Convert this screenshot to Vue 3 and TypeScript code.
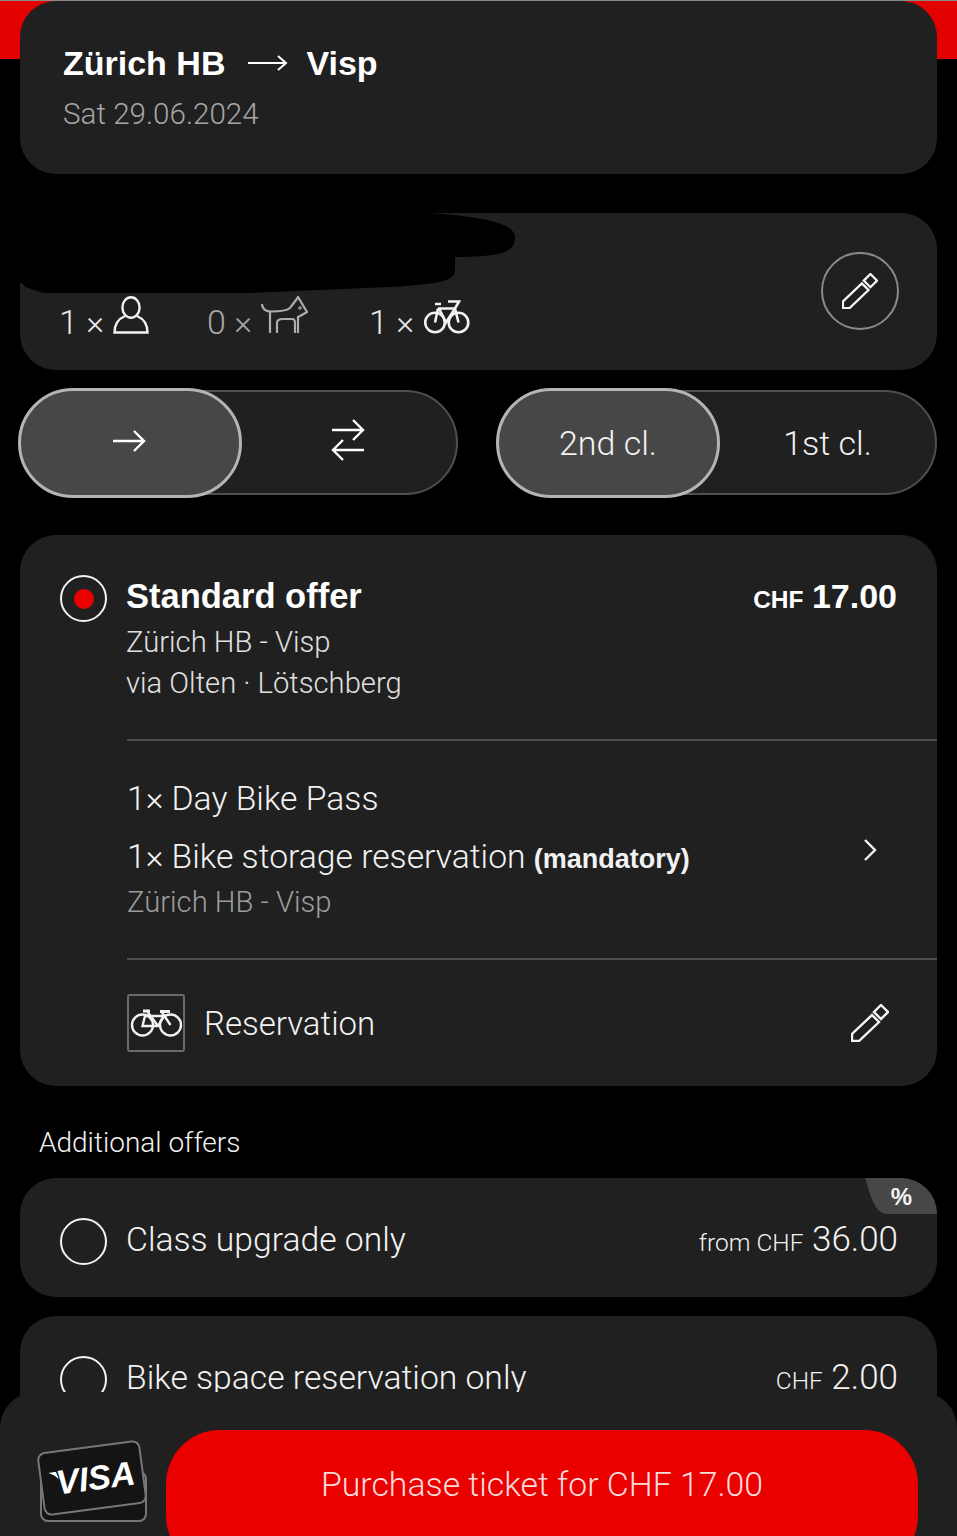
<script setup lang="ts">
import { ref } from "vue";

const trip = ref({ from: "Zürich HB", to: "Visp", date: "Sat 29.06.2024" });
const lines = ["1× Day Bike Pass"];
</script>

<template>
	<div class="page">
		<header class="card head">
			<div class="route">
				<span>{{ trip.from }}</span>
				<svg class="route-arrow" width="40" height="18" viewBox="0 0 40 18" fill="none" stroke="#fff" stroke-width="2">
					<path d="M0 9H38M30 2L38 9L30 16" />
				</svg>
				<span>{{ trip.to }}</span>
			</div>
			<div class="date">{{ trip.date }}</div>
		</header>

		<section class="card travellers">
			<div class="count-row">
				<div class="count">
					<span>1 ×</span>
					<svg width="36" height="38" viewBox="0 0 36 38" fill="none" stroke="#f2f2f2" stroke-width="2.4">
						<ellipse cx="18" cy="11.5" rx="8.6" ry="10.2" />
						<path d="M12 20C5 23 1.5 29 1.5 36.5H34.5C34.5 29 31 23 24 20" />
					</svg>
				</div>
				<div class="count dim">
					<span>0 ×</span>
					<svg width="47" height="38" viewBox="0 0 47 38" fill="none" stroke="#adadad" stroke-width="2.2">
						<path d="M0.8 8C2 14 5 15.5 10 15.5C18 15.5 26 14.5 29 12L35 4L37 1L46 16L39 20L37 21V37" />
						<path d="M9 15.5V37M16 37V27C16 24 19 23 22 23H31C33 23 34 24 34 27V37" />
						<circle cx="39" cy="12" r="0.6" />
					</svg>
				</div>
				<div class="count">
					<span>1 ×</span>
					<svg class="count-bike" width="46" height="34" viewBox="0 0 46 34" fill="none" stroke="#f2f2f2" stroke-width="2.6">
						<circle cx="11" cy="22.5" r="9.8" />
						<circle cx="34.5" cy="22.5" r="9.8" />
						<path d="M11 4H17M24 1.5H35L31 8.5H14M11 22.5L14 8.5M15 8.5L22 22.5L31 8.5L34.5 22.5" />
					</svg>
				</div>
			</div>
			<button class="edit-round">
				<svg width="36" height="36" viewBox="0 0 38 38" fill="none" stroke="#f5f5f5" stroke-width="2.4">
					<path d="M1 37V30L21 11L28 18L8 37Z" />
					<path d="M30 1L37 8L30 15L23 8Z" />
				</svg>
			</button>
			<svg class="blackout" width="520" height="82" viewBox="0 0 520 82">
				<path d="M0 0H430C470 3 515 8 515 24C515 38 505 44 455 44V57C455 66 447 71 390 74L250 80H43L25 74C23 70 20 68 0 68Z" fill="#000" />
			</svg>
		</section>

		<div class="toggles">
			<div class="toggle">
				<div class="seg on">
					<svg class="lift" width="34" height="24" viewBox="0 0 34 24" fill="none" stroke="#fff" stroke-width="2.4">
						<path d="M1 12H32M22 2L32 12L22 22" />
					</svg>
				</div>
				<div class="seg">
					<svg class="lift" width="34" height="44" viewBox="0 0 34 44" fill="none" stroke="#fff" stroke-width="2.4">
						<path d="M1 12H32M22 2L32 12L22 22" />
						<path d="M33 32H2M12 22L2 32L12 42" />
					</svg>
				</div>
			</div>
			<div class="toggle">
				<div class="seg on">2nd cl.</div>
				<div class="seg">1st cl.</div>
			</div>
		</div>

		<section class="card offer">
			<div class="offer-top">
				<span class="radio checked"><i></i></span>
				<div class="offer-info">
					<div class="offer-title">
						<strong>Standard offer</strong>
						<span class="price"><b class="cur">CHF</b> <b>17.00</b></span>
					</div>
					<div class="sub first">Zürich HB - Visp</div>
					<div class="sub">via Olten · Lötschberg</div>
				</div>
			</div>
			<div class="rule"></div>
			<div class="items">
				<div class="items-text">
					<div class="item" v-for="l in lines" :key="l">{{ l }}</div>
					<div class="item second">1× Bike storage reservation <b>(mandatory)</b></div>
					<div class="sub muted">Zürich HB - Visp</div>
				</div>
				<svg class="chev" width="14" height="24" viewBox="0 0 14 24" fill="none" stroke="#f5f5f5" stroke-width="2.4">
					<path d="M2 2L12 12L2 22" />
				</svg>
			</div>
			<div class="rule"></div>
			<div class="resv">
				<span class="bike-box">
					<svg width="52" height="30" viewBox="0 0 52 30" fill="none" stroke="#f2f2f2" stroke-width="2.4">
						<circle cx="12.5" cy="17" r="10.5" />
						<circle cx="40.5" cy="17" r="10.5" />
						<path d="M17 3L28 18M15 8H34L28 18H12.5L15 8M31 3L40.5 17" />
						<path d="M13 3H20M30 3.5H40" stroke-width="2.8" />
					</svg>
				</span>
				<span class="resv-label">Reservation</span>
				<svg width="38" height="38" viewBox="0 0 38 38" fill="none" stroke="#f5f5f5" stroke-width="2.4">
					<path d="M1 37V30L21 11L28 18L8 37Z" />
					<path d="M30 1L37 8L30 15L23 8Z" />
				</svg>
			</div>
		</section>

		<div class="section-title">Additional offers</div>

		<section class="card extra">
			<span class="radio"></span>
			<span class="extra-label">Class upgrade only</span>
			<span class="extra-price"><small>from CHF</small> 36.00</span>
			<svg class="pct-bg" width="72" height="36" viewBox="0 0 72 36">
				<path d="M0 0C4 10 8 36 22 36H72V0Z" fill="#474747" />
			</svg>
			<span class="pct">%</span>
		</section>
		<section class="card extra">
			<span class="radio"></span>
			<span class="extra-label">Bike space reservation only</span>
			<span class="extra-price"><small>CHF</small> 2.00</span>
		</section>

		<footer class="buy-bar">
			<div class="visa">
				<span class="visa-back"></span>
				<span class="visa-front">
					<svg class="swoosh" width="10" height="8" viewBox="0 0 10 8"><path d="M0 0H8L10 8C7 4 4 2 0 0Z" fill="#fff" /></svg>
					<span class="visa-word">VISA</span>
				</span>
			</div>
			<button class="buy">Purchase ticket for CHF 17.00</button>
		</footer>
	</div>
</template>

<style>
body {
	margin: 0;
	background: #000;
}
</style>

<style scoped>
.page {
	position: relative;
	width: 957px;
	height: 1536px;
	overflow: hidden;
	box-sizing: border-box;
	border-top: 1px solid #8a8a8a;
	background: linear-gradient(#e30000 58px, #000 58px);
	font-family: Roboto, "Liberation Sans", sans-serif;
	font-weight: 300;
	color: #f2f2f2;
}
b,
strong {
	font-family: "Liberation Sans", Arial, sans-serif;
	font-weight: 700;
}
.card {
	background: #202020;
	margin: 0 20px;
	border-radius: 36px;
}
.head {
	height: 173px;
	box-sizing: border-box;
	padding: 40px 43px 0;
}
.route {
	display: flex;
	align-items: center;
	height: 44px;
	font: 700 34px/44px "Liberation Sans", Arial, sans-serif;
	color: #fff;
}
.route-arrow {
	margin: 0 18px 0 23px;
}
.date {
	margin-top: 9px;
	font-size: 29.6px;
	line-height: 40px;
	color: #a6a6a6;
}
.travellers {
	position: relative;
	height: 157px;
	margin-top: 39px;
	box-sizing: border-box;
	padding: 0 38px 0 39px;
	display: flex;
	align-items: center;
	justify-content: space-between;
}
.count-row {
	display: flex;
	gap: 58px;
	align-self: flex-end;
	margin-bottom: 36px;
}
.count {
	display: flex;
	align-items: flex-end;
	gap: 8px;
	font-size: 34px;
	line-height: 38px;
	color: #e6e6e6;
}
.count.dim {
	color: #a6a6a6;
	margin-right: 3px;
}
.count span {
	width: 46px;
	margin-bottom: -7px;
	white-space: nowrap;
}
.count-bike {
	margin-left: 1px;
}
.edit-round {
	display: flex;
	align-items: center;
	justify-content: center;
	width: 78px;
	height: 78px;
	margin-top: -2px;
	padding: 0;
	border: 2px solid #8a8a8a;
	border-radius: 50%;
	background: transparent;
}
.blackout {
	position: absolute;
	left: -20px;
	top: 0;
}
.toggles {
	display: grid;
	grid-template-columns: 438px 440px;
	gap: 39px;
	margin: 20px 20px 0;
}
.toggle {
	display: flex;
	height: 105px;
	box-sizing: border-box;
	border: 2px solid #4f4f4f;
	border-radius: 53px;
	background: #202020;
}
.seg {
	flex: 1;
	display: flex;
	align-items: center;
	justify-content: center;
	font-size: 34px;
	color: #f2f2f2;
}
.seg.on {
	flex: none;
	width: 224px;
	margin: -4px 0 -5px -4px;
	box-sizing: border-box;
	border: 3px solid #b4b4b4;
	border-radius: 56px;
	background: #474747;
}
.toggle:last-child .seg.on {
	margin-left: -3px;
}
.lift {
	margin: 0 3px 5px 0;
}
.offer {
	height: 551px;
	margin-top: 40px;
	overflow: hidden;
}
.offer-top {
	display: flex;
	height: 204px;
	box-sizing: border-box;
	padding: 40px 40px 0;
	gap: 19px;
}
.radio {
	flex: none;
	box-sizing: border-box;
	display: flex;
	align-items: center;
	justify-content: center;
	width: 47px;
	height: 47px;
	border: 2.5px solid #f2f2f2;
	border-radius: 50%;
}
.radio i {
	width: 20px;
	height: 20px;
	border-radius: 50%;
	background: #eb0000;
}
.offer-info {
	flex: 1;
}
.offer-title {
	display: flex;
	justify-content: space-between;
	align-items: baseline;
	height: 42px;
	font-size: 34.5px;
	line-height: 42px;
	color: #fff;
}
.price b {
	font-size: 34px;
}
.price .cur {
	font-size: 24.5px;
}
.sub {
	font-size: 29.2px;
	line-height: 41px;
	color: #e0e0e0;
}
.sub.first {
	margin-top: 5px;
}
.muted {
	color: #9c9c9c;
}
.rule {
	height: 2px;
	margin-left: 107px;
	background: #4d4d4d;
}
.items {
	display: flex;
	justify-content: space-between;
	height: 217px;
	box-sizing: border-box;
	padding: 36px 60px 0 107px;
}
.item {
	font-size: 33.7px;
	line-height: 44px;
	color: #f2f2f2;
}
.item.second {
	margin-top: 14px;
}
.item.second b {
	font-size: 27px;
}
.items-text .sub {
	margin-top: 1px;
}
.chev {
	margin-top: 61px;
}
.resv {
	display: flex;
	align-items: center;
	height: 126px;
	padding: 0 48px 0 107px;
}
.bike-box {
	display: flex;
	align-items: center;
	justify-content: center;
	width: 58px;
	height: 58px;
	box-sizing: border-box;
	border: 2px solid #6a6a6a;
	border-radius: 3px;
	margin-right: 19px;
}
.resv-label {
	flex: 1;
	font-size: 33px;
}
.section-title {
	margin: 39px 0 0 39px;
	height: 35px;
	font-size: 28px;
	line-height: 36px;
	color: #f2f2f2;
}
.extra {
	position: relative;
	display: flex;
	align-items: center;
	height: 119px;
	box-sizing: border-box;
	padding: 4px 39px 0 40px;
	margin-top: 18px;
	overflow: hidden;
}
.extra + .extra {
	margin-top: 19px;
}
.extra .radio {
	margin: 4px 19px 0 0;
}
.extra-label {
	flex: 1;
	font-size: 33.7px;
}
.extra-price {
	font-size: 35px;
}
.extra-price small {
	font-size: 24.5px;
}
.pct-bg {
	position: absolute;
	right: 0;
	top: 0;
}
.pct {
	position: absolute;
	right: 25px;
	top: 0;
	font: 700 24px/38px "Liberation Sans", Arial, sans-serif;
	color: #f2f2f2;
}
.buy-bar {
	position: absolute;
	left: 0;
	right: 0;
	bottom: 0;
	height: 144px;
	background: #202020;
	border-radius: 36px 36px 0 0;
	display: flex;
	padding: 38px 39px 0 37px;
	box-sizing: border-box;
	gap: 17px;
}
.visa {
	position: relative;
	flex: none;
	width: 112px;
	height: 82px;
	margin-top: 11px;
}
.visa-back {
	position: absolute;
	left: 3px;
	top: 30px;
	width: 107px;
	height: 51px;
	box-sizing: border-box;
	border: 2px solid #777;
	border-radius: 8px;
	background: #141414;
}
.visa-front {
	position: absolute;
	left: 3px;
	top: 5px;
	width: 104px;
	height: 64px;
	box-sizing: border-box;
	border: 2px solid #777;
	border-radius: 8px;
	background: #141414;
	transform: rotate(-7.5deg);
	display: flex;
	align-items: center;
	justify-content: center;
}
.swoosh {
	margin: 0 -3px 14px 0;
}
.visa-word {
	font: italic 700 34px/1 "Liberation Sans", Arial, sans-serif;
	color: #fff;
}
.buy {
	flex: 1;
	height: 140px;
	border: 0;
	border-radius: 54px;
	background: #eb0000;
	padding: 0 0 32px;
	font-family: inherit;
	font-weight: 300;
	font-size: 33.8px;
	color: #f8dcdc;
}
</style>
